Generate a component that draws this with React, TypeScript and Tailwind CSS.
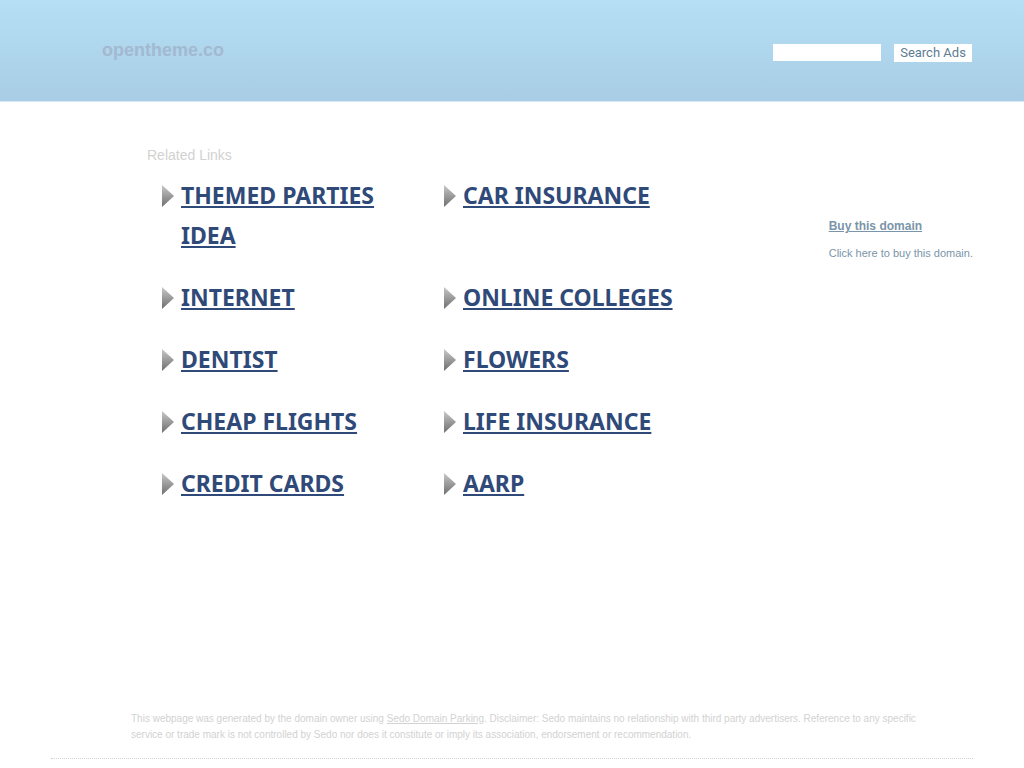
const links: string[] = [
  'THEMED PARTIES IDEA',
  'CAR INSURANCE',
  'INTERNET',
  'ONLINE COLLEGES',
  'DENTIST',
  'FLOWERS',
  'CHEAP FLIGHTS',
  'LIFE INSURANCE',
  'CREDIT CARDS',
  'AARP',
];

function Arrow() {
  return (
    <svg width="12" height="22" viewBox="0 0 12 22" className="mt-[10px] shrink-0" aria-hidden="true">
      <defs>
        <linearGradient id="arrow-fill" x1="0" y1="0" x2="0" y2="1">
          <stop offset="0" stopColor="#c8c8c8" />
          <stop offset="1" stopColor="#6e6e6e" />
        </linearGradient>
      </defs>
      <path d="M0 0L12 11L0 22Z" fill="url(#arrow-fill)" />
    </svg>
  );
}

export default function App() {
  return (
    <div className="flex min-h-screen flex-col bg-white font-['Liberation_Sans',Arial,sans-serif]">
      <header className="flex h-[102px] items-start justify-between border-b border-[#d6e8f4] bg-linear-to-b from-[#b5dff5] to-[#a8cde5] pr-[52px] pl-[102px]">
        <h1 className="mt-[38px] text-[18px] leading-6 font-bold text-[#a3b9d0]">opentheme.co</h1>
        <form className="mt-11 flex items-start gap-[13px]" onSubmit={(e) => e.preventDefault()}>
          <input type="text" aria-label="Search" className="h-[17px] w-[108px] bg-white px-1 text-xs text-[#5b7d95] outline-none" />
          <button type="submit" className="h-[18px] w-[78px] bg-white text-center font-[Roboto,sans-serif] text-[13px] leading-[18px] text-[#5b7d95]">
            Search Ads
          </button>
        </form>
      </header>

      <main className="flex flex-1 items-start justify-between pr-[51px] pl-[147px]">
        <section className="pt-[43px]">
          <h2 className="text-[14px] leading-5 text-[#d2d2d2]">Related Links</h2>
          <ul className="mt-[10px] ml-[15px] grid grid-cols-[240px_240px] gap-x-[42px] gap-y-[22px]">
            {links.map((label) => (
              <li key={label} className="flex items-start gap-[7px]">
                <Arrow />
                <a href="#" className="font-['Noto_Sans',sans-serif] text-[23px] leading-10 font-bold text-[#2f4979] underline decoration-2 underline-offset-2">
                  {label}
                </a>
              </li>
            ))}
          </ul>
        </section>
        <aside className="pt-[116px] text-[#7a95a9]">
          <a href="#" className="block text-[12px] leading-4 font-bold underline">Buy this domain</a>
          <p className="mt-[11px] text-[11px] leading-4">Click here to buy this domain.</p>
        </aside>
      </main>

      <footer className="mr-[51px] mb-[9px] ml-[51px] border-b border-dotted border-[#d2d2d2] pr-[50px] pb-[15px] pl-20 text-[10px] leading-4 text-[#d2d2d2]">
        <p>
          This webpage was generated by the domain owner using{' '}
          <a href="#" className="underline">Sedo Domain Parking</a>. Disclaimer: Sedo maintains no relationship with third party advertisers. Reference to any specific service or trade mark is not controlled by Sedo nor does it constitute or imply its association, endorsement or recommendation.
        </p>
      </footer>
    </div>
  );
}
